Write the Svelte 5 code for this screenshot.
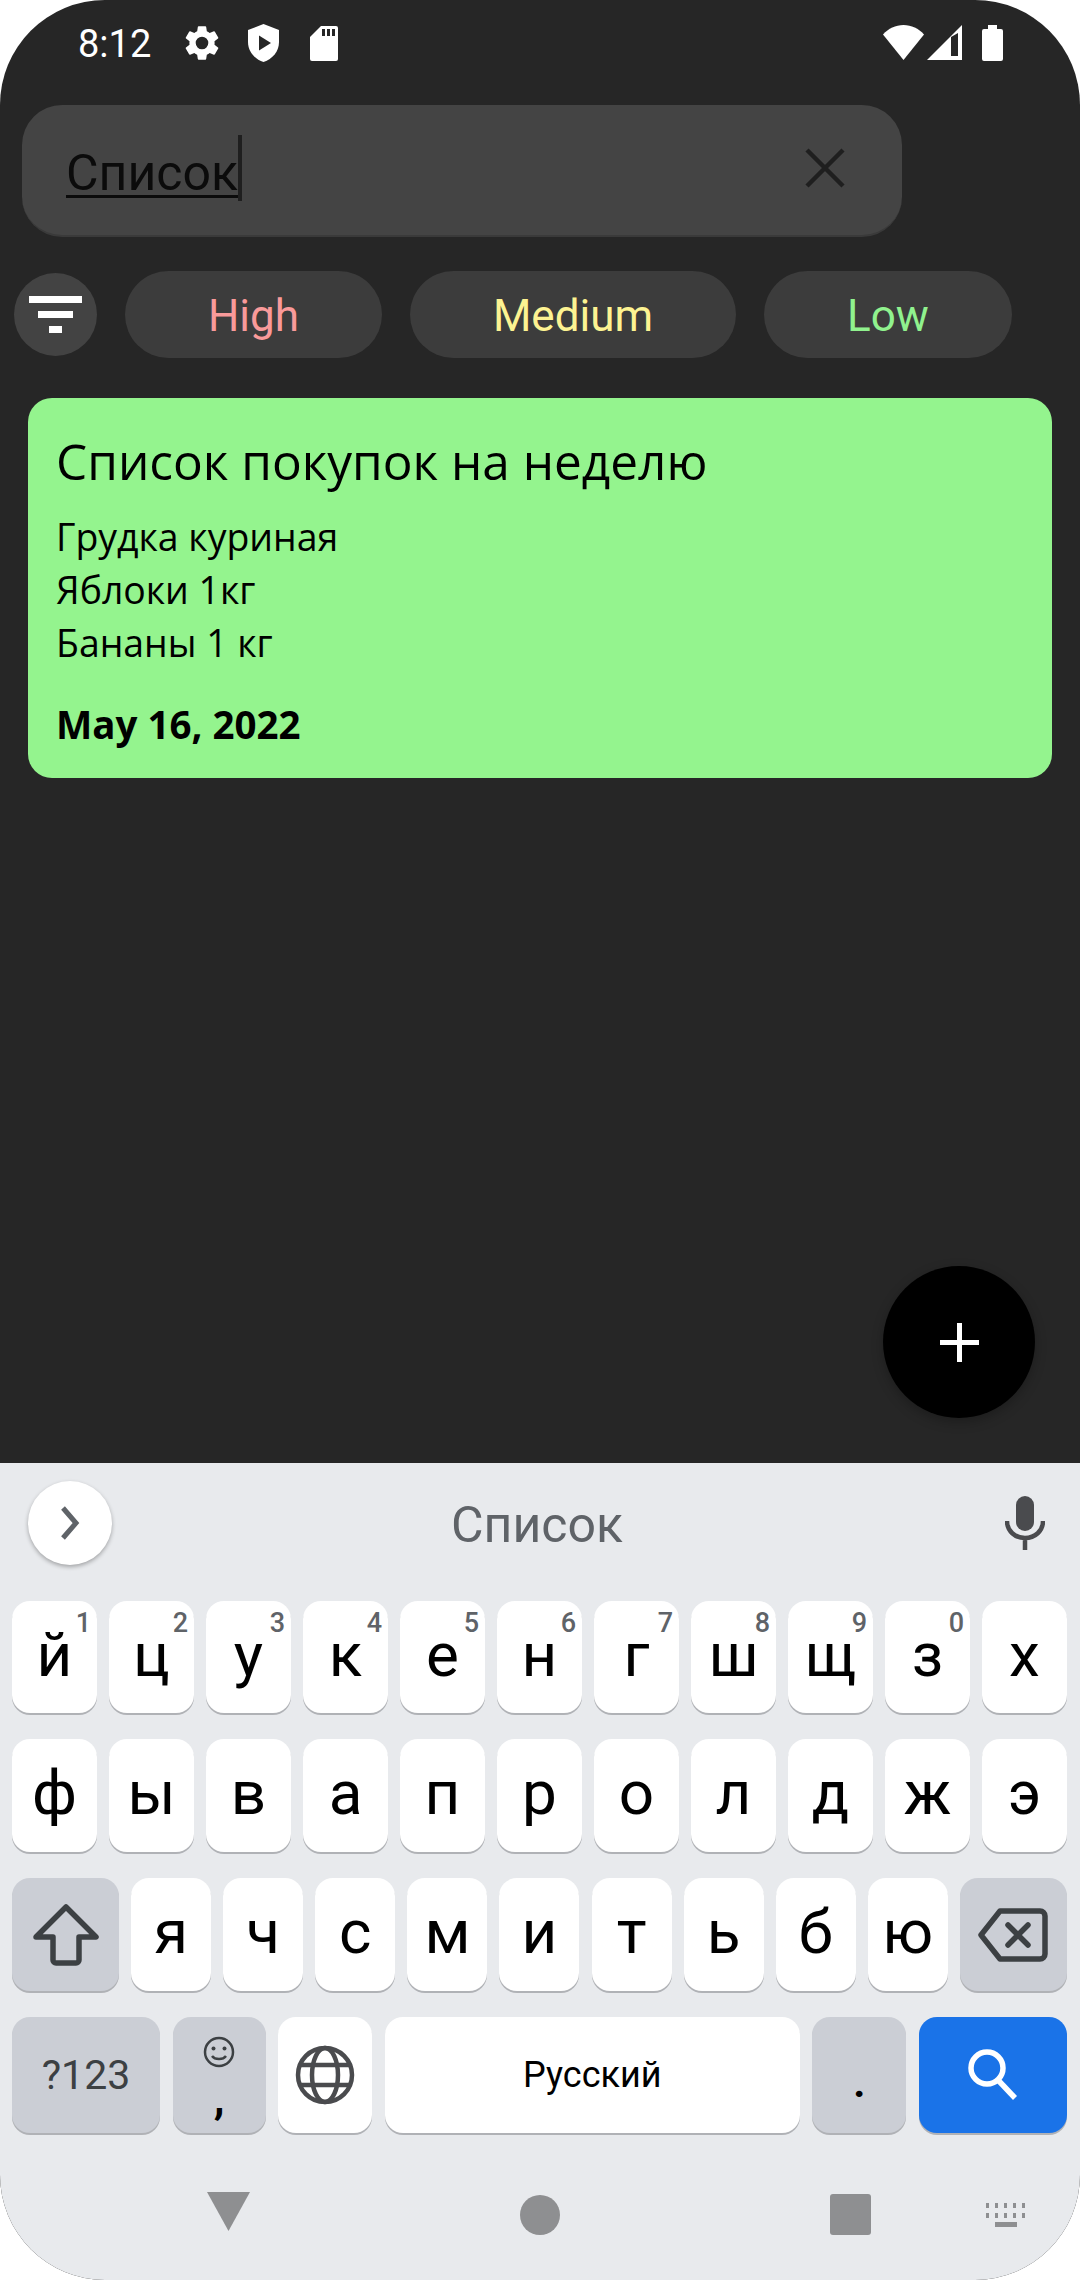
<script lang="ts">
  const chips = [
    { label: "High", tone: "high" },
    { label: "Medium", tone: "medium" },
    { label: "Low", tone: "low" }
  ];
  const noteLines = ["Грудка куриная", "Яблоки 1кг", "Бананы 1 кг"];

  const topRow = [
    ["й", "1"], ["ц", "2"], ["у", "3"], ["к", "4"], ["е", "5"], ["н", "6"],
    ["г", "7"], ["ш", "8"], ["щ", "9"], ["з", "0"], ["х", ""]
  ];
  const middleRow = ["ф", "ы", "в", "а", "п", "р", "о", "л", "д", "ж", "э"];
  const bottomRow = ["я", "ч", "с", "м", "и", "т", "ь", "б", "ю"];
</script>

<div class="phone">
  <!-- Status bar -->
  <div class="status">
    <div class="status-left">
      <span class="time">8:12</span>
      <svg class="ic-gear" viewBox="0 0 24 24" fill="#fff"><path d="M19.14 12.94c.04-.3.06-.61.06-.94s-.02-.64-.07-.94l2.03-1.58a.5.5 0 0 0 .12-.61l-1.92-3.32a.5.5 0 0 0-.59-.22l-2.39.96a7 7 0 0 0-1.62-.94l-.36-2.54a.48.48 0 0 0-.48-.41h-3.84a.47.47 0 0 0-.47.41l-.36 2.54c-.59.24-1.13.57-1.62.94l-2.39-.96a.49.49 0 0 0-.59.22L2.74 8.87a.48.48 0 0 0 .12.61l2.03 1.58c-.05.3-.09.63-.09.94s.02.64.07.94l-2.03 1.58a.5.5 0 0 0-.12.61l1.92 3.32c.12.22.37.29.59.22l2.39-.96c.5.38 1.03.7 1.62.94l.36 2.54c.05.24.24.41.48.41h3.84c.24 0 .44-.17.47-.41l.36-2.54c.59-.24 1.13-.56 1.62-.94l2.39.96c.22.08.47 0 .59-.22l1.92-3.32a.46.46 0 0 0-.12-.61zM12 15.6a3.6 3.6 0 1 1 0-7.2 3.6 3.6 0 0 1 0 7.2z"/></svg>
      <svg class="ic-shield" viewBox="0 0 31 38"><path fill="#fff" d="M15.5 0 31 6v12c0 9.500-6.500 17-15.500 20C6.500 35 0 27.500 0 18V6z"/><path fill="#262626" d="M11 11.500 23 19l-12 7.500z"/></svg>
      <svg class="ic-sd" viewBox="0 0 28 35"><path fill="#fff" d="M11 0h15a2 2 0 0 1 2 2v31a2 2 0 0 1-2 2H2a2 2 0 0 1-2-2V11z"/><path fill="#262626" d="M12 3h3v7h-3zM17 3h3v7h-3zM22 3h3v7h-3z"/></svg>
    </div>
    <div class="status-right">
      <svg class="ic-wifi" viewBox="0 0 41 35"><path fill="#fff" d="M20.500 35 0 9.500C5.500 3.500 12.500 0 20.500 0S35.500 3.500 41 9.500z"/></svg>
      <svg class="ic-signal" viewBox="0 0 35 35"><path fill="#fff" d="M35 0v35H0z"/><path fill="#262626" d="M24 12 31 8v23h-7z"/></svg>
      <svg class="ic-battery" viewBox="0 0 21 36"><path fill="#fff" d="M6 0h9v4h4a2 2 0 0 1 2 2v28a2 2 0 0 1-2 2H2a2 2 0 0 1-2-2V6a2 2 0 0 1 2-2h4z"/></svg>
    </div>
  </div>

  <div class="content">
    <!-- Search -->
    <div class="search">
      <span class="query">Список</span>
      <span class="caret"></span>
      <svg class="clear" viewBox="0 0 40 40"><path d="M2 2 38 38M38 2 2 38" stroke="#1f1f1f" stroke-width="4.500" fill="none"/></svg>
    </div>

    <!-- Priority filter -->
    <div class="filters">
      <button class="filter-btn" aria-label="Filter">
        <span class="bar bar-a"></span>
        <span class="bar bar-b"></span>
        <span class="bar bar-c"></span>
      </button>
      {#each chips as chip}
        <button class="chip {chip.tone}">{chip.label}</button>
      {/each}
    </div>

    <!-- Note -->
    <div class="note">
      <div class="note-title">Список покупок на неделю</div>
      <div class="note-body">
        {#each noteLines as line}
          <div>{line}</div>
        {/each}
      </div>
      <div class="note-date">May 16, 2022</div>
    </div>

    <button class="fab" aria-label="Add">
      <svg viewBox="0 0 39 39" width="39" height="39"><path d="M17 0h5v17h17v5H22v17h-5V22H0v-5h17z" fill="#fff"/></svg>
    </button>
  </div>

  <!-- Keyboard -->
  <div class="keyboard">
    <div class="suggest">
      <div class="expand">
        <svg viewBox="0 0 20 36" width="20" height="36"><path d="M3 3 16 18 3 33" stroke="#5f6368" stroke-width="5" fill="none"/></svg>
      </div>
      <span class="suggest-word">Список</span>
      <svg class="mic" viewBox="0 0 40 54"><path fill="#4a4b4e" d="M20 0a9 9 0 0 1 9 9v17a9 9 0 0 1-18 0V9a9 9 0 0 1 9-9z"/><path d="M2 25c0 10 8 17 18 17s18-7 18-17M20 42v12" stroke="#4a4b4e" stroke-width="4.500" fill="none"/></svg>
    </div>

    <div class="row row-one">
      {#each topRow as [letter, digit]}
        <div class="key letter">
          <span>{letter}</span>
          {#if digit}<span class="hint">{digit}</span>{/if}
        </div>
      {/each}
    </div>

    <div class="row">
      {#each middleRow as letter}
        <div class="key letter"><span>{letter}</span></div>
      {/each}
    </div>

    <div class="row row-three">
      <div class="key fn wide">
        <svg viewBox="0 0 66 62" width="66" height="62"><path d="M33 3 63 33H46v23a3 3 0 0 1-3 3H23a3 3 0 0 1-3-3V33H3z" stroke="#3c4043" stroke-width="5.500" stroke-linejoin="round" fill="none"/></svg>
      </div>
      {#each bottomRow as letter}
        <div class="key letter narrow"><span>{letter}</span></div>
      {/each}
      <div class="key fn wide">
        <svg viewBox="0 0 70 54" width="70" height="54"><path d="M22 3H62a5 5 0 0 1 5 5V46a5 5 0 0 1-5 5H22L3 27z" stroke="#3c4043" stroke-width="5.500" stroke-linejoin="round" fill="none"/><path d="M30 17 50 37M50 17 30 37" stroke="#3c4043" stroke-width="5.500" stroke-linecap="round"/></svg>
      </div>
    </div>

    <div class="row row-four">
      <div class="key fn sym">?123</div>
      <div class="key fn emoji">
        <svg viewBox="0 0 32 32" width="32" height="32"><circle cx="16" cy="16" r="14" stroke="#3c4043" stroke-width="2.500" fill="none"/><circle cx="10.500" cy="12.500" r="2" fill="#3c4043"/><circle cx="21.500" cy="12.500" r="2" fill="#3c4043"/><path d="M9 20c3 4 11 4 14 0" stroke="#3c4043" stroke-width="2.500" fill="none"/></svg>
        <span class="comma">,</span>
      </div>
      <div class="key globe">
        <svg viewBox="0 0 60 60" width="60" height="60" fill="none" stroke="#4a4b4e" stroke-width="4.500"><circle cx="30" cy="30" r="27"/><ellipse cx="30" cy="30" rx="13" ry="27"/><path d="M5 20h50M5 40h50"/></svg>
      </div>
      <div class="key space">Русский</div>
      <div class="key fn period">.</div>
      <div class="key go">
        <svg viewBox="0 0 50 52" width="50" height="52" fill="none" stroke="#fff" stroke-width="5.500"><circle cx="19" cy="19" r="16"/><path d="M30 31 47 49"/></svg>
      </div>
    </div>

    <!-- Navigation bar -->
    <div class="nav">
      <svg class="nav-back" viewBox="0 0 43 39"><path d="M0 0h43L21.500 39z" fill="#8e8f91"/></svg>
      <span class="nav-home"></span>
      <span class="nav-recent"></span>
      <svg class="nav-kbd" viewBox="0 0 42 24" fill="#8e8f91"><path d="M0 0h3v5H0zM9 0h3v5H9zM18 0h3v5h-3zM27 0h3v5h-3zM36 0h3v5h-3zM0 10h3v5H0zM9 10h3v5H9zM18 10h3v5h-3zM27 10h3v5h-3zM36 10h3v5h-3zM9 19h22v5H9z"/></svg>
    </div>
  </div>
</div>

<style>
  :global(body) {
    background: #fff;
  }

  .phone {
    width: 1080px;
    height: 2280px;
    position: relative;
    display: flex;
    flex-direction: column;
    overflow: hidden;
    border-radius: 105px;
    background: #262626;
    font-family: Roboto, "Noto Sans", sans-serif;
  }

  /* Status bar */
  .status {
    height: 105px;
    flex: none;
    display: flex;
    justify-content: space-between;
    align-items: flex-start;
    padding: 24px 77px 0 78px;
    box-sizing: border-box;
    color: #fff;
  }

  .status-left,
  .status-right {
    display: flex;
    align-items: flex-start;
  }

  .time {
    font-size: 38px;
    line-height: 38px;
    margin-top: 1px;
    width: 108px;
  }

  .ic-gear { width: 42px; height: 42px; margin: -2px 24px 0 -5px; }
  .ic-shield { width: 31px; height: 38px; margin-left: 1px; }
  .ic-sd { width: 28px; height: 35px; margin: 2px 0 0 31px; }
  .ic-wifi { width: 41px; height: 35px; margin-top: 1px; }
  .ic-signal { width: 35px; height: 35px; margin: 1px 0 0 3px; }
  .ic-battery { width: 21px; height: 36px; margin: 1px 0 0 20px; }

  .content {
    flex: 1;
    position: relative;
    display: flex;
    flex-direction: column;
  }

  /* Search */
  .search {
    width: 880px;
    height: 132px;
    margin-left: 22px;
    padding: 0 57px 0 44px;
    box-sizing: border-box;
    display: flex;
    align-items: center;
    background: #444;
    border-radius: 40px;
    border-bottom: 2px solid #3a3a3a;
  }

  .query {
    font-size: 50px;
    line-height: 58px;
    margin-top: 5px;
    color: #0b0b0b;
    text-decoration: underline;
    text-decoration-thickness: 3px;
    text-underline-offset: 5px;
  }

  .caret {
    width: 4px;
    height: 66px;
    margin-top: -4px;
    background: #1f1f1f;
  }

  .clear {
    width: 40px;
    height: 40px;
    margin: -4px 0 0 auto;
  }

  /* Priority filter */
  .filters {
    display: flex;
    align-items: center;
    margin: 34px 0 0 14px;
    gap: 28px;
  }

  .filter-btn {
    width: 83px;
    height: 83px;
    padding: 0;
    border: none;
    border-radius: 50%;
    background: #434343;
    display: flex;
    flex-direction: column;
    align-items: center;
    gap: 8px;
    justify-content: center;
  }

  .bar {
    display: block;
    height: 7px;
    background: #fff;
  }

  .bar-a { width: 53px; }
  .bar-b { width: 35px; }
  .bar-c { width: 13px; }

  .chip {
    height: 87px;
    padding: 3px 0 0;
    border: none;
    border-radius: 44px;
    background: #3c3c3c;
    font-family: Roboto, sans-serif;
    font-size: 44px;
  }

  .chip.high { width: 257px; color: #f99a9a; }
  .chip.medium { width: 326px; color: #fdf392; }
  .chip.low { width: 248px; color: #90f28e; }

  /* Note */
  .note {
    width: 1024px;
    height: 380px;
    margin: 40px 0 0 28px;
    padding: 31px 28px 0;
    box-sizing: border-box;
    background: #94f48e;
    border-radius: 24px;
    color: #000;
    font-family: "Open Sans", "Noto Sans", sans-serif;
  }

  .note-title {
    font-size: 49.5px;
    line-height: 64px;
  }

  .note-body {
    margin-top: 17px;
    font-size: 37.4px;
    line-height: 53px;
  }

  .note-date {
    margin-top: 30px;
    font-size: 38.5px;
    line-height: 50px;
    font-weight: 700;
  }

  .fab {
    position: absolute;
    left: 883px;
    top: 1161px;
    width: 152px;
    height: 152px;
    padding: 0;
    border: none;
    border-radius: 50%;
    background: #000;
    box-shadow: 0 4px 12px rgba(0, 0, 0, 0.25);
    display: flex;
    align-items: center;
    justify-content: center;
  }

  /* Keyboard */
  .keyboard {
    height: 817px;
    flex: none;
    background: #e8eaed;
    padding: 0 13px 0 12px;
    box-sizing: border-box;
    display: flex;
    flex-direction: column;
  }

  .suggest {
    height: 138px;
    flex: none;
    display: flex;
    align-items: flex-start;
    position: relative;
  }

  .expand {
    width: 84px;
    height: 84px;
    margin: 18px 0 0 16px;
    border-radius: 50%;
    background: #fff;
    box-shadow: 0 2px 4px rgba(0, 0, 0, 0.3);
    display: flex;
    align-items: center;
    justify-content: center;
  }

  .suggest-word {
    font-size: 50px;
    line-height: 56px;
    color: #5f6368;
    margin: 34px 0 0 339px;
  }

  .mic {
    width: 40px;
    height: 54px;
    margin: 33px 22px 0 auto;
  }

  .row {
    display: flex;
    gap: 12px;
    height: 113px;
    margin-bottom: 26px;
    flex: none;
  }

  .row-one {
    height: 112px;
  }

  .row-four {
    height: 116px;
    margin-bottom: 0;
    justify-content: space-between;
    gap: 0;
  }

  .key {
    flex: 1 1 0;
    position: relative;
    display: flex;
    align-items: center;
    justify-content: center;
    background: #fff;
    border-radius: 18px;
    box-shadow: 0 2px 0 #b0b2b6;
    color: #000;
    font-size: 54px;
  }

  .key.letter {
    font-size: 62px;
  }

  .key.letter > span:first-child {
    margin-top: -6px;
  }

  .key.letter > .hint {
    position: absolute;
    top: 6px;
    right: 6px;
    font-size: 27px;
    line-height: 32px;
    font-weight: 500;
    color: #5f6368;
  }

  .key.fn {
    background: #cbced5;
  }

  .key.wide {
    flex: 0 0 107px;
  }

  .key.narrow {
    flex: 0 0 80px;
  }

  .row-three {
    justify-content: space-between;
  }

  .sym {
    flex: 0 0 148px;
    font-size: 41px;
    color: #3c4043;
  }

  .emoji {
    flex: 0 0 93px;
    flex-direction: column;
    justify-content: flex-start;
    padding-top: 19px;
    box-sizing: border-box;
  }

  .comma {
    font-size: 44px;
    line-height: 44px;
    margin-top: 8px;
    font-weight: 700;
  }

  .globe {
    flex: 0 0 94px;
  }

  .space {
    flex: 0 0 415px;
    font-size: 36px;
  }

  .period {
    flex: 0 0 94px;
    font-size: 42px;
    font-weight: 700;
    align-items: flex-end;
    padding-bottom: 26px;
    box-sizing: border-box;
  }

  .go {
    flex: 0 0 148px;
    background: #1a73e8;
  }

  /* Navigation bar */
  .nav {
    flex: 1;
    position: relative;
    display: flex;
    align-items: center;
    padding-top: 16px;
  }

  .nav-back {
    width: 43px;
    height: 39px;
    margin: 0 0 7px 195px;
  }

  .nav-home {
    width: 40px;
    height: 40px;
    margin-left: 270px;
    border-radius: 50%;
    background: #8e8f91;
  }

  .nav-recent {
    width: 41px;
    height: 41px;
    margin-left: 270px;
    border-radius: 3px;
    background: #8e8f91;
  }

  .nav-kbd {
    width: 42px;
    height: 24px;
    margin-left: 115px;
  }
</style>
